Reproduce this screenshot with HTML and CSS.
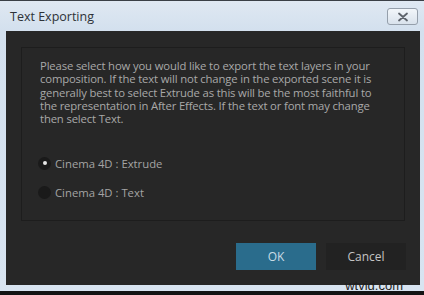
FILE: index.html
```html
<!DOCTYPE html>
<html>
<head>
<meta charset="utf-8">
<link rel="stylesheet" href="styles.css">
</head>
<body>
<div class="window">
  <div class="titlebar">
    <span class="title">Text Exporting</span>
    <span class="close">
      <svg width="14" height="10" viewBox="0 0 14 10"><path d="M3 1.5 L11 8.5 M11 1.5 L3 8.5" stroke="#5d636b" stroke-width="1.8" stroke-linecap="round"/></svg>
    </span>
  </div>
  <div class="client">
    <div class="panel">
      <p class="msg">Please select how you would like to export the text layers in your composition. If the text will not change in the exported scene it is generally best to select Extrude as this will be the most faithful to the representation in After Effects. If the text or font may change then select Text.</p>
      <div class="options">
        <div class="option"><span class="radio on"></span><span>Cinema 4D : Extrude</span></div>
        <div class="option"><span class="radio"></span><span>Cinema 4D : Text</span></div>
      </div>
    </div>
    <div class="buttons">
      <div class="btn ok">OK</div>
      <div class="btn cancel">Cancel</div>
    </div>
  </div>
  <div class="footer"><span class="wm">wtvid.com</span></div>
</div>
</body>
</html>
```
FILE: styles.css
```css
html, body { margin: 0; padding: 0; }
body { width: 424px; height: 295px; overflow: hidden; background: #141414; font-family: "Open Sans", "DejaVu Sans", sans-serif; }
.window {
  width: 424px; height: 291px; box-sizing: border-box;
  border-top: 1px solid #3a3f46;
  background: linear-gradient(#dfe8f2, #d3e0ee 30px, #d8e4f1);
  display: flex; flex-direction: column;
}
.titlebar { height: 30px; display: flex; align-items: center; justify-content: space-between; padding: 0 6px 0 10px; box-sizing: border-box; }
.title { font-size: 12.5px; color: #2e3238; margin-top: 1px; }
.close {
  width: 29px; height: 15px; border: 1px solid #959fab; border-radius: 3px;
  background: linear-gradient(#f2f6fa, #d9e2ec);
  display: flex; align-items: center; justify-content: center; margin-top: 1px;
}
.client { margin: 0 4px 0 6px; background: #272727; height: 254px; box-sizing: border-box; padding: 16px 15px 0 15px; display: flex; flex-direction: column; }
.panel { border: 1px solid #1d1d1d; height: 174px; box-sizing: border-box; padding: 11px 18px 0 18px; }
.msg { margin: 0; color: #a9a9a9; font-size: 11.3px; line-height: 13.3px; letter-spacing: -0.15px; }
.options { margin-top: 30px; display: flex; flex-direction: column; gap: 13px; }
.option { display: flex; align-items: center; gap: 4px; color: #a4a4a4; font-size: 11.3px; height: 16px; margin-left: -2px; }
.radio { width: 13px; height: 13px; border-radius: 50%; background: #1a1a1a; display: flex; align-items: center; justify-content: center; }
.radio.on::after { content: ""; width: 4px; height: 4px; border-radius: 50%; background: #e6e6e6; }
.buttons { display: flex; justify-content: flex-end; gap: 10px; margin-top: 22px; }
.btn { width: 80px; height: 27px; display: flex; align-items: center; justify-content: center; font-size: 12px; }
.ok { background: #2a6c8c; color: #c9dbe5; }
.cancel { background: #222222; color: #c4c4c4; margin-right: -1px; }
.footer { flex: 1; position: relative; }
.wm { position: absolute; right: 21px; top: -7px; font-family: "Liberation Sans", Arial, sans-serif; font-size: 13px; color: #1e1e1e; }
```
